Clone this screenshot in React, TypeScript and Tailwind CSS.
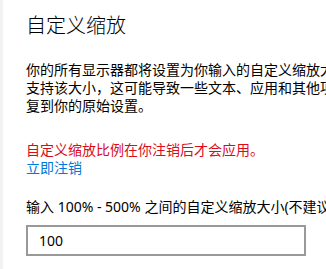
export default function App() {
  const font = { fontFamily: '"Noto Sans", "Noto Sans CJK SC", sans-serif' };

  return (
    <div className="flex w-[326px] h-[269px] overflow-hidden bg-white text-black" style={font}>
      {/* left pane edge */}
      <div className="w-[3px] shrink-0 bg-[#f2f2f2]" />

      <div className="flex flex-col pl-[23px] pt-[12px] whitespace-nowrap">
        <h1 className="text-[20px] leading-[28px] font-light">自定义缩放</h1>

        <div className="mt-[21px] text-[14px] leading-[18px]">
          <p>你的所有显示器都将设置为你输入的自定义缩放大小。你的某些显示器可能不</p>
          <p>支持该大小，这可能导致一些文本、应用和其他项无法阅读。若要恢</p>
          <p>复到你的原始设置。</p>
        </div>

        <p className="mt-[26px] text-[14px] leading-[18px] text-[#d80c1a]">
          自定义缩放比例在你注销后才会应用。
        </p>
        <a className="text-[14px] leading-[18px] text-[#0078d7] cursor-pointer">立即注销</a>

        <label className="mt-[21px] text-[14px] leading-[18px]">
          输入 100% - 500% 之间的自定义缩放大小(不建议)
        </label>
        <input
          type="text"
          defaultValue="100"
          className="mt-[9px] w-[280px] h-[31px] border-2 border-[#999999] pl-[11px] text-[14px] text-black outline-none"
        />
      </div>
    </div>
  );
}
